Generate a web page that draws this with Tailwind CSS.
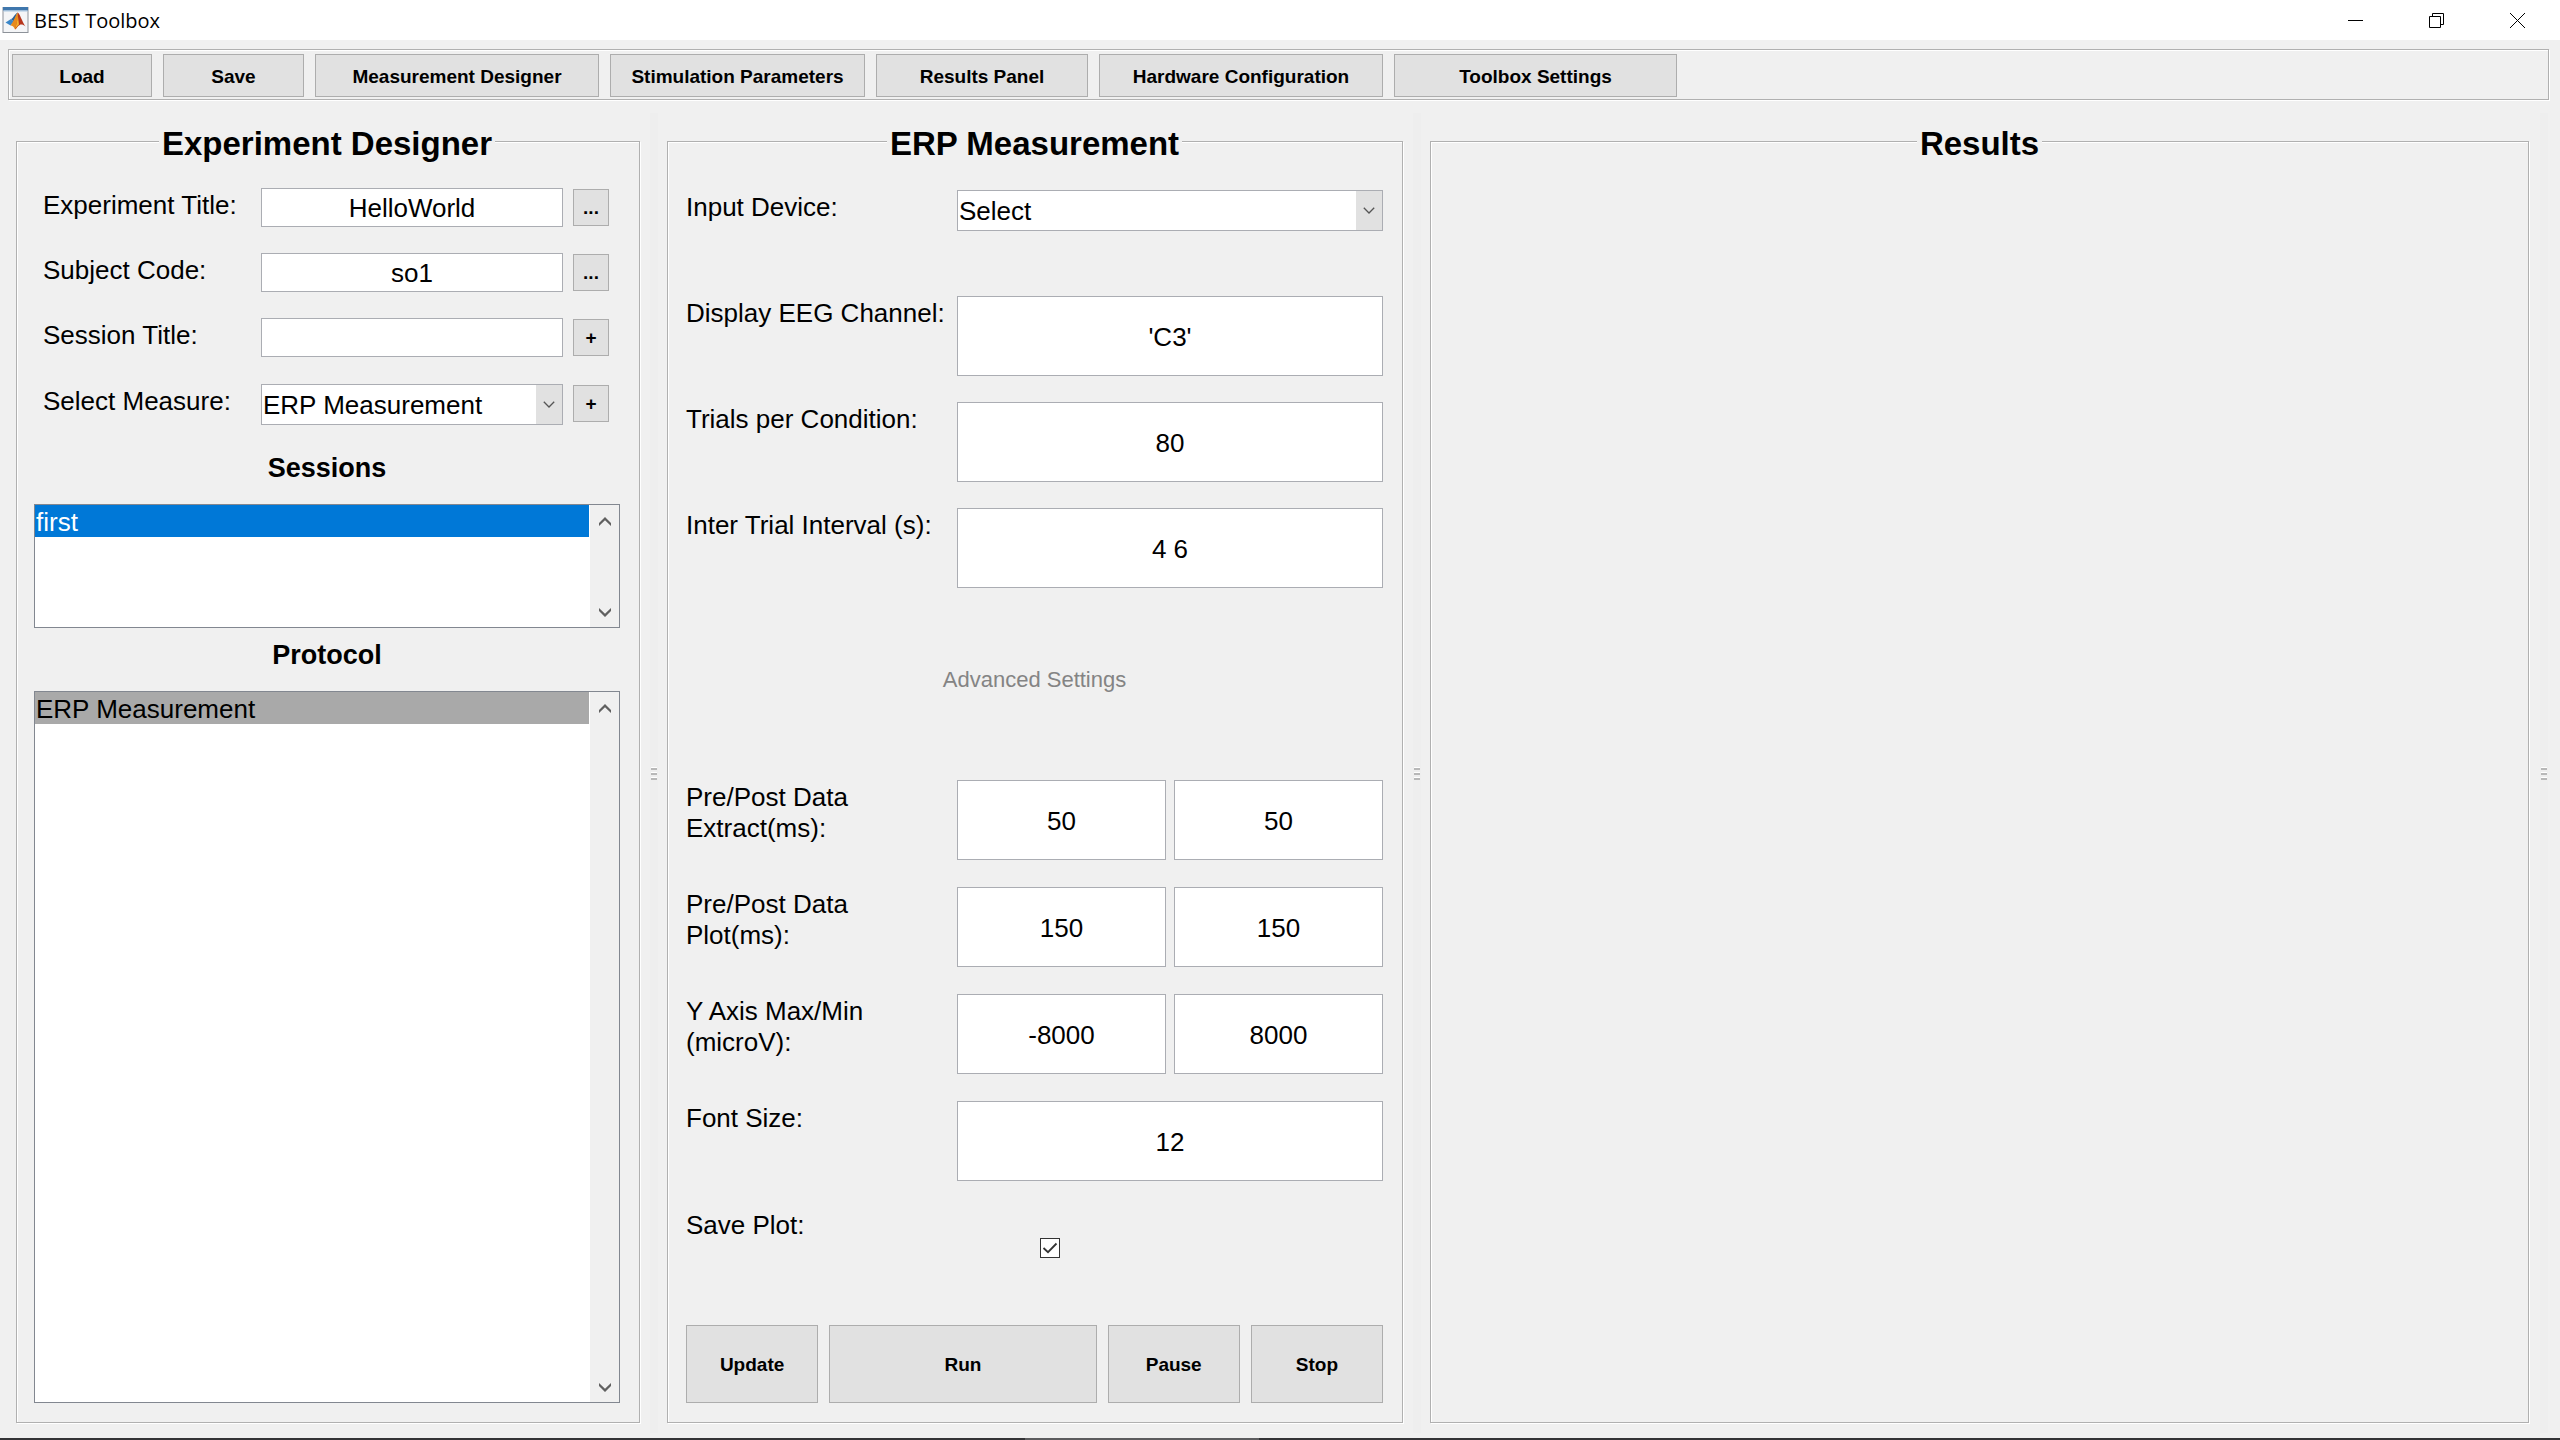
<!DOCTYPE html>
<html lang="en">
<head>
<meta charset="utf-8">
<title>BEST Toolbox</title>
<script src="https://cdn.jsdelivr.net/npm/@tailwindcss/browser@4"></script>
</head>
<body class="flex min-h-screen flex-col bg-[#f0f0f0] font-['Liberation_Sans',Arial,sans-serif] text-[26px] leading-[31px] text-black">

<!-- Window title bar -->
<header class="flex h-10 items-center bg-white pr-0.5">
  <svg class="ml-0.5 h-7 w-7" viewBox="0 0 28 28" aria-hidden="true">
    <rect x="1" y="1.500" width="25" height="25" fill="#f4f5f7" stroke="#8d9299"/>
    <rect x="1" y="1" width="25" height="3.500" fill="#3f77ad"/>
    <path d="M1.500 4.500h24v1h-24z" fill="#a9c6e0"/>
    <path d="M3.500 16.500 9 13l3 2.500-3.500 4z" fill="#3a86c8"/>
    <path d="M9 13c2-.5 3-4 6.500-6.500L12 15.500z" fill="#2a6099"/>
    <path d="M15.500 6.500c-1.500 2-3 7.500-7 13 2 0 3.500 1.500 4.500 4 2-1 3-4.500 5-4.500z" fill="#e88a1c"/>
    <path d="M15.500 6.500c2 0 4.500 9 8 14-2.500-2-4-2.500-6-1.500-2 .5-3 3.500-4.500 4.500 1-5 3.500-10 2.500-17z" fill="#b7351c"/>
    <path d="M15.500 7c.5 5-.5 10-2.500 16 1.500-1.500 2.500-4 4-4.500z" fill="#f3b02c"/>
  </svg>
  <h1 class="ml-1 flex-1 pt-0.5 font-['Open_Sans',sans-serif] text-[20px] leading-6">BEST Toolbox</h1>
  <button type="button" aria-label="Minimize" class="flex h-10 w-[81px] items-center justify-center">
    <svg class="h-[15px] w-[15px]" viewBox="0 0 15 15"><path d="M0 7.500h15" stroke="#000"/></svg>
  </button>
  <button type="button" aria-label="Restore" class="flex h-10 w-[81px] items-center justify-center">
    <svg class="h-[15px] w-[15px]" viewBox="0 0 15 15" fill="none" stroke="#000"><path d="M.5 3.500h11v11H.5zM3.500 3.500v-3h11v11h-3"/></svg>
  </button>
  <button type="button" aria-label="Close" class="flex h-10 w-[81px] items-center justify-center">
    <svg class="h-[15px] w-[15px]" viewBox="0 0 15 15" stroke="#000"><path d="M0 0l15 15M15 0L0 15"/></svg>
  </button>
</header>

<!-- Toolbar -->
<nav class="mt-[9px] mr-[11px] ml-2 flex gap-[11px] border border-[#b0b0b0] pt-1 pb-0.5 pl-[3px] text-[19px] font-bold shadow-[1px_1px_0_white,inset_1px_1px_0_white]">
  <button type="button" class="h-[43px] w-[140px] border border-[#adadad] bg-[#e1e1e1] pt-px">Load</button>
  <button type="button" class="h-[43px] w-[141px] border border-[#adadad] bg-[#e1e1e1] pt-px">Save</button>
  <button type="button" class="h-[43px] w-[284px] border border-[#adadad] bg-[#e1e1e1] pt-px">Measurement Designer</button>
  <button type="button" class="h-[43px] w-[255px] border border-[#adadad] bg-[#e1e1e1] pt-px">Stimulation Parameters</button>
  <button type="button" class="h-[43px] w-[212px] border border-[#adadad] bg-[#e1e1e1] pt-px">Results Panel</button>
  <button type="button" class="h-[43px] w-[284px] border border-[#adadad] bg-[#e1e1e1] pt-px">Hardware Configuration</button>
  <button type="button" class="h-[43px] w-[283px] border border-[#adadad] bg-[#e1e1e1] pt-px">Toolbox Settings</button>
</nav>

<main class="mt-[13px] mb-[5px] grid flex-1 grid-cols-[624fr_27px_736fr_27px_1099fr_29px] pr-0.5 pl-4">

  <!-- Experiment Designer -->
  <fieldset class="mt-2 mb-[10px] flex min-w-0 flex-col border border-[#b0b0b0] pr-[19px] pb-[19px] pl-[17px] shadow-[1px_1px_0_white,inset_1px_1px_0_white]">
    <legend class="mx-auto bg-[#f0f0f0] px-[3px] pt-1 text-[33px] leading-[37px] font-bold">Experiment Designer</legend>

    <div class="grid grid-cols-[218px_1fr_46px] gap-y-[26px] pt-[26px] pr-[11px] pl-[9px]">
      <label for="title" class="pt-0.5">Experiment Title:</label>
      <input id="title" type="text" value="HelloWorld" class="h-[39px] w-full min-w-0 border border-[#abadb3] bg-white pt-0.5 text-center">
      <button type="button" aria-label="Browse experiments" class="ml-[10px] h-[37px] self-center border border-[#adadad] bg-[#e1e1e1] text-[19px] font-bold">...</button>

      <label for="subject" class="pt-0.5">Subject Code:</label>
      <input id="subject" type="text" value="so1" class="h-[39px] w-full min-w-0 border border-[#abadb3] bg-white pt-0.5 text-center">
      <button type="button" aria-label="Browse subjects" class="ml-[10px] h-[37px] self-center border border-[#adadad] bg-[#e1e1e1] text-[19px] font-bold">...</button>

      <label for="session" class="pt-0.5">Session Title:</label>
      <input id="session" type="text" value="" class="h-[39px] w-full min-w-0 border border-[#abadb3] bg-white pt-0.5 text-center">
      <button type="button" aria-label="Add session" class="ml-[10px] h-[37px] self-center border border-[#adadad] bg-[#e1e1e1] text-[19px] font-bold">+</button>
    </div>
    <div class="grid grid-cols-[218px_1fr_46px] pt-[27px] pr-[11px] pl-[9px]">
      <label for="measure" class="pt-0.5">Select Measure:</label>
      <div class="relative">
        <select id="measure" class="h-[41px] w-full appearance-none border border-[#abadb3] bg-white pt-0.5 pl-px"><option>ERP Measurement</option></select>
        <span class="pointer-events-none absolute inset-y-px right-px flex w-[26px] items-center justify-center bg-[#e1e1e1]">
          <svg class="h-[7px] w-3" viewBox="0 0 12 7" fill="none" stroke="#555" stroke-width="1.300"><path d="M.8.8 6 6 11.200.8"/></svg>
        </span>
      </div>
      <button type="button" aria-label="Add measure" class="mt-px ml-[10px] h-[37px] border border-[#adadad] bg-[#e1e1e1] text-[19px] font-bold">+</button>
    </div>

    <h2 id="sessions" class="mt-[28px] text-center text-[27px] leading-[31px] font-bold">Sessions</h2>
    <div class="mt-5 flex h-[124px] border border-[#828790] bg-white">
      <ul role="listbox" aria-labelledby="sessions" class="flex-1">
        <li role="option" aria-selected="true" class="h-8 bg-[#0078d7] pl-px leading-[34px] text-white">first</li>
      </ul>
      <div class="ml-px flex w-[29px] flex-col justify-between bg-[#f0f0f0]">
        <button type="button" aria-label="Scroll up" class="flex h-[33px] items-center justify-center"><svg class="h-[9px] w-3" viewBox="0 0 12 9" fill="#606060"><path d="M6 0l6 6v3L6 3.200 0 9V6z"/></svg></button>
        <button type="button" aria-label="Scroll down" class="flex h-[29px] items-center justify-center"><svg class="h-[9px] w-3" viewBox="0 0 12 9" fill="#606060"><path d="M6 9l6-6V0L6 5.800 0 0v3z"/></svg></button>
      </div>
    </div>

    <h2 id="protocol" class="mt-3 text-center text-[27px] leading-[31px] font-bold">Protocol</h2>
    <div class="mt-5 flex flex-1 border border-[#828790] bg-white">
      <ul role="listbox" aria-labelledby="protocol" class="flex-1">
        <li role="option" aria-selected="true" class="h-8 bg-[#a9a9a9] pl-px leading-[34px]">ERP Measurement</li>
      </ul>
      <div class="ml-px flex w-[29px] flex-col justify-between bg-[#f0f0f0]">
        <button type="button" aria-label="Scroll up" class="flex h-[33px] items-center justify-center"><svg class="h-[9px] w-3" viewBox="0 0 12 9" fill="#606060"><path d="M6 0l6 6v3L6 3.200 0 9V6z"/></svg></button>
        <button type="button" aria-label="Scroll down" class="flex h-[29px] items-center justify-center"><svg class="h-[9px] w-3" viewBox="0 0 12 9" fill="#606060"><path d="M6 9l6-6V0L6 5.800 0 0v3z"/></svg></button>
      </div>
    </div>
  </fieldset>

  <!-- Splitter -->
  <div class="flex items-center justify-center"><div class="flex h-full w-2 flex-col items-center justify-center gap-0.5 bg-[#eeeeee]">
    <i class="h-[3px] w-1.5 border-t border-white bg-[#b8b8b8]"></i><i class="h-[3px] w-1.5 border-t border-white bg-[#b8b8b8]"></i><i class="h-[3px] w-1.5 border-t border-white bg-[#b8b8b8]"></i>
  </div></div>

  <!-- ERP Measurement -->
  <fieldset class="mt-2 mb-[10px] flex min-w-0 flex-col border border-[#b0b0b0] pr-[19px] pb-[19px] pl-[18px] shadow-[1px_1px_0_white,inset_1px_1px_0_white]">
    <legend class="mx-auto bg-[#f0f0f0] px-[3px] pt-1 text-[33px] leading-[37px] font-bold">ERP Measurement</legend>

    <div class="grid grid-cols-[271px_1fr] pt-7">
      <label for="device" class="pt-0.5">Input Device:</label>
      <div class="relative">
        <select id="device" class="h-[41px] w-full appearance-none border border-[#abadb3] bg-white pt-0.5 pl-px"><option>Select</option></select>
        <span class="pointer-events-none absolute inset-y-px right-px flex w-[26px] items-center justify-center bg-[#e1e1e1]">
          <svg class="h-[7px] w-3" viewBox="0 0 12 7" fill="none" stroke="#555" stroke-width="1.300"><path d="M.8.8 6 6 11.200.8"/></svg>
        </span>
      </div>
    </div>

    <div class="mt-[65px] grid grid-cols-[271px_1fr] gap-y-[26px]">
      <label for="channel" class="pt-0.5 whitespace-nowrap">Display EEG Channel:</label>
      <input id="channel" type="text" value="'C3'" class="h-20 w-full min-w-0 border border-[#abadb3] bg-white pt-0.5 text-center">
      <label for="trials" class="pt-0.5">Trials per Condition:</label>
      <input id="trials" type="text" value="80" class="h-20 w-full min-w-0 border border-[#abadb3] bg-white pt-0.5 text-center">
      <label for="iti" class="pt-0.5">Inter Trial Interval (s):</label>
      <input id="iti" type="text" value="4 6" class="h-20 w-full min-w-0 border border-[#abadb3] bg-white pt-0.5 text-center">
    </div>

    <h2 class="mt-[79px] text-center text-[22px] leading-[26px] text-[#848484]">Advanced Settings</h2>

    <div class="mt-[87px] grid grid-cols-[271px_1fr_1fr] gap-y-[27px]">
      <label for="extract" class="pt-0.5">Pre/Post Data<br>Extract(ms):</label>
      <div class="col-span-2 grid grid-cols-2 gap-2">
        <input id="extract" type="text" value="50" class="h-20 w-full min-w-0 border border-[#abadb3] bg-white pt-0.5 text-center">
        <input aria-label="Post data extract (ms)" type="text" value="50" class="h-20 w-full min-w-0 border border-[#abadb3] bg-white pt-0.5 text-center">
      </div>
      <label for="plot" class="pt-0.5">Pre/Post Data<br>Plot(ms):</label>
      <div class="col-span-2 grid grid-cols-2 gap-2">
        <input id="plot" type="text" value="150" class="h-20 w-full min-w-0 border border-[#abadb3] bg-white pt-0.5 text-center">
        <input aria-label="Post data plot (ms)" type="text" value="150" class="h-20 w-full min-w-0 border border-[#abadb3] bg-white pt-0.5 text-center">
      </div>
      <label for="yaxis" class="pt-0.5">Y Axis Max/Min<br>(microV):</label>
      <div class="col-span-2 grid grid-cols-2 gap-2">
        <input id="yaxis" type="text" value="-8000" class="h-20 w-full min-w-0 border border-[#abadb3] bg-white pt-0.5 text-center">
        <input aria-label="Y axis min (microV)" type="text" value="8000" class="h-20 w-full min-w-0 border border-[#abadb3] bg-white pt-0.5 text-center">
      </div>
      <label for="fontsize" class="pt-0.5">Font Size:</label>
      <input id="fontsize" type="text" value="12" class="col-span-2 h-20 w-full min-w-0 border border-[#abadb3] bg-white pt-0.5 text-center">
      <label for="saveplot" class="pt-0.5">Save Plot:</label>
      <div class="col-span-2 flex h-20 items-center pl-[83px]">
        <span class="relative flex">
          <input id="saveplot" type="checkbox" checked class="h-5 w-5 appearance-none border border-[#333333] bg-white">
          <svg class="pointer-events-none absolute inset-0 h-5 w-5" viewBox="0 0 20 20" fill="none" stroke="#333" stroke-width="1.800"><path d="M3.500 10 8 14.200 16.500 5.500"/></svg>
        </span>
      </div>
    </div>

    <div class="mt-auto grid grid-cols-[132fr_267fr_132fr_132fr] gap-[11px] text-[19px] font-bold">
      <button type="button" class="h-[78px] border border-[#adadad] bg-[#e1e1e1] pt-px">Update</button>
      <button type="button" class="h-[78px] border border-[#adadad] bg-[#e1e1e1] pt-px">Run</button>
      <button type="button" class="h-[78px] border border-[#adadad] bg-[#e1e1e1] pt-px">Pause</button>
      <button type="button" class="h-[78px] border border-[#adadad] bg-[#e1e1e1] pt-px">Stop</button>
    </div>
  </fieldset>

  <!-- Splitter -->
  <div class="flex items-center justify-center"><div class="flex h-full w-2 flex-col items-center justify-center gap-0.5 bg-[#eeeeee]">
    <i class="h-[3px] w-1.5 border-t border-white bg-[#b8b8b8]"></i><i class="h-[3px] w-1.5 border-t border-white bg-[#b8b8b8]"></i><i class="h-[3px] w-1.5 border-t border-white bg-[#b8b8b8]"></i>
  </div></div>

  <!-- Results -->
  <fieldset class="mt-2 mb-[10px] min-w-0 border border-[#b0b0b0] shadow-[1px_1px_0_white,inset_1px_1px_0_white]">
    <legend class="mx-auto bg-[#f0f0f0] px-[3px] pt-1 text-[33px] leading-[37px] font-bold">Results</legend>
  </fieldset>

  <!-- Splitter -->
  <div class="flex items-center justify-center"><div class="flex h-full w-2 flex-col items-center justify-center gap-0.5 bg-[#eeeeee]">
    <i class="h-[3px] w-1.5 border-t border-white bg-[#b8b8b8]"></i><i class="h-[3px] w-1.5 border-t border-white bg-[#b8b8b8]"></i><i class="h-[3px] w-1.5 border-t border-white bg-[#b8b8b8]"></i>
  </div></div>
</main>

<!-- Edge of the taskbar with the active window's segment -->
<footer class="grid h-0.5 grid-cols-[1025fr_234fr_1301fr] bg-[#333336]"><span class="col-start-2 bg-[#5c5c5e]"></span></footer>
</body>
</html>
